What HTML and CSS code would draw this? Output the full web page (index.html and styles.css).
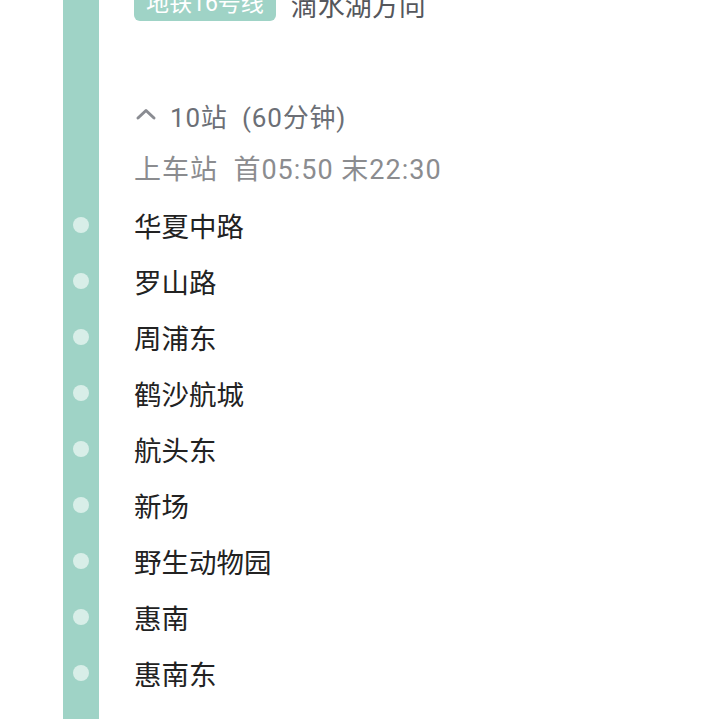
FILE: index.html
```html
<!DOCTYPE html>
<html>
  <head>
    <link rel="stylesheet" href="styles.css">
  </head>
  <body>
    <div class="route">
      <div class="row row-line">
        <div class="rail"></div>
        <div class="cell">
          <span class="line-badge">地铁16号线</span>
          <span class="direction">滴水湖方向</span>
        </div>
      </div>

      <div class="row row-gap">
        <div class="rail"></div>
      </div>

      <div class="row row-summary">
        <div class="rail"></div>
        <div class="cell">
          <svg class="chevron" width="22" height="14" viewBox="0 0 22 14">
            <path d="M3 11 L11 3.5 L19 11" fill="none" stroke="#8a8c92" stroke-width="3" stroke-linecap="round" stroke-linejoin="round" />
          </svg>
          <span>10站&nbsp; (60分钟)</span>
        </div>
      </div>

      <div class="row row-info">
        <div class="rail"></div>
        <div class="cell">上车站&nbsp; 首05:50 末22:30</div>
      </div>

      <div id="stations"></div>

      <div class="row row-tail">
        <div class="rail"></div>
      </div>
    </div>

    <script>
      var stations = [
        "华夏中路",
        "罗山路",
        "周浦东",
        "鹤沙航城",
        "航头东",
        "新场",
        "野生动物园",
        "惠南",
        "惠南东",
      ];

      var list = document.getElementById("stations");

      stations.forEach(function (name) {
        var row = document.createElement("div");
        row.className = "row row-station";

        var rail = document.createElement("div");
        rail.className = "rail";
        var dot = document.createElement("span");
        dot.className = "dot";
        rail.appendChild(dot);

        var cell = document.createElement("div");
        cell.className = "cell";
        cell.textContent = name;

        row.appendChild(rail);
        row.appendChild(cell);
        list.appendChild(row);
      });
    </script>
  </body>
</html>
```

FILE: styles.css
```css
body {
  margin: 0;
  padding: 0;
  background-color: #ffffff;
  font-family: "Roboto", "Noto Sans CJK SC", sans-serif;
  overflow: hidden;
}

.route {
  margin-top: -16px;
  padding-left: 63px;
}

.row {
  display: flex;
  align-items: stretch;
}

.rail {
  width: 36px;
  flex-shrink: 0;
  background-color: #9fd3c6;
  display: flex;
  align-items: center;
  justify-content: center;
}

.cell {
  flex: 1;
  display: flex;
  align-items: center;
  padding-left: 35px;
}

.row-line {
  height: 40px;
}

.line-badge {
  background-color: #9fd3c6;
  color: #ffffff;
  font-size: 23px;
  line-height: 34px;
  height: 34px;
  padding: 0 12px;
  border-radius: 6px;
}

.direction {
  margin-left: 15px;
  font-size: 27px;
  color: #55575c;
}

.row-gap {
  height: 67px;
}

.row-summary {
  height: 50px;
  font-size: 26px;
  letter-spacing: 0.8px;
  color: #6c6f76;
}

.row-summary .cell {
  padding-bottom: 2px;
}

.chevron {
  margin-left: 1px;
  margin-right: 13px;
  margin-top: -2px;
}

.row-info {
  height: 56px;
  font-size: 27px;
  letter-spacing: 1px;
  color: #8b8c8f;
}

.row-info .cell {
  padding-bottom: 4px;
}

.row-station {
  height: 56px;
  font-size: 27.5px;
  color: #222222;
}

.dot {
  width: 16px;
  height: 16px;
  border-radius: 50%;
  background-color: #d8eee8;
}

.row-tail {
  height: 40px;
}
```
